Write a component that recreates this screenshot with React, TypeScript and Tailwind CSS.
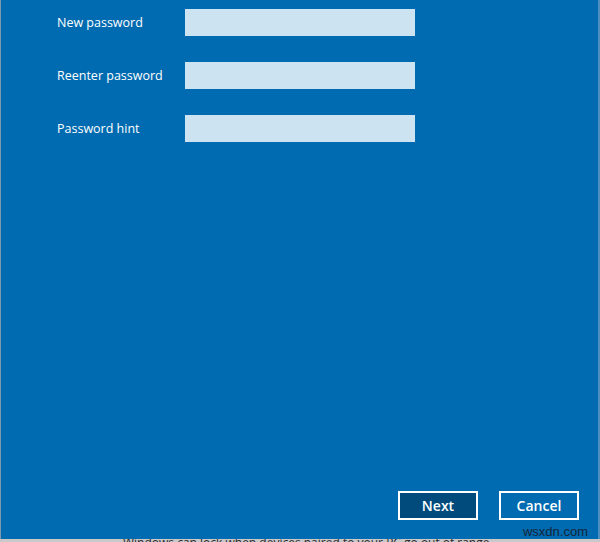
import React from "react";

const font = { fontFamily: '"Open Sans", "Noto Sans", "Liberation Sans", sans-serif' };

function Field({ label }: { label: string }) {
    return (
        <div className="flex items-center h-[27px]">
            <span className="w-[128px] text-[12.5px] text-white leading-none pt-[1px]">{label}</span>
            <div className="w-[230px] h-[27px] bg-[#cce3f2]" />
        </div>
    );
}

export default function App() {
    return (
        <div className="w-[600px] h-[542px] flex flex-col bg-[#c9c9c9] overflow-hidden" style={font}>
            <main className="relative flex-1 flex flex-col bg-[#006bb0] border-l border-l-[#7f98ab] border-r-2 border-r-[#4f8fc0]">
                <div className="flex flex-col gap-[26px] pt-[9px] pl-[56px]">
                    <Field label="New password" />
                    <Field label="Reenter password" />
                    <Field label="Password hint" />
                </div>

                <div className="mt-auto flex justify-end gap-[21px] pr-[19px] pb-[19px]">
                    <button className="w-[80px] h-[29px] border-2 border-white bg-[#004a7c] text-white text-[14px] font-semibold leading-none">
                        Next
                    </button>
                    <button className="w-[80px] h-[29px] border-2 border-white bg-[#006bb0] text-white text-[14px] font-semibold leading-none">
                        Cancel
                    </button>
                </div>

                <span
                    className="absolute right-[10px] bottom-[1px] text-[13px] leading-none text-[#14263a]"
                    style={{ fontFamily: '"Liberation Sans", Arial, sans-serif' }}
                >
                    wsxdn.com
                </span>
            </main>
            <div className="h-[3px] overflow-hidden pl-[123px]">
                <p className="text-[12px] leading-[12px] text-[#2a2a2a] whitespace-nowrap -mt-[2px]">
                    Windows can lock when devices paired to your PC go out of range
                </p>
            </div>
        </div>
    );
}
